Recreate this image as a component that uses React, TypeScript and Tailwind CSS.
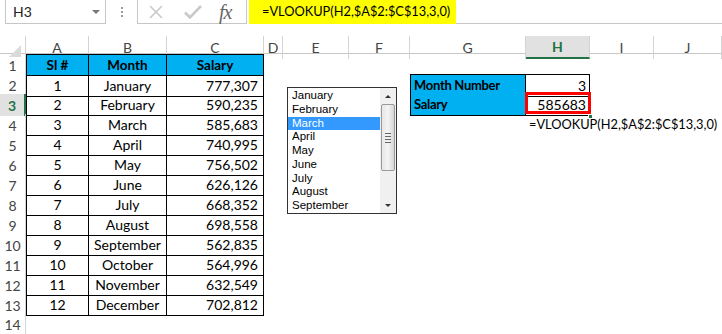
import React from "react";

const months = [
  "January",
  "February",
  "March",
  "April",
  "May",
  "June",
  "July",
  "August",
  "September",
  "October",
  "November",
  "December",
];
const salaries = [
  "777,307",
  "590,235",
  "585,683",
  "740,995",
  "756,502",
  "626,126",
  "668,352",
  "698,558",
  "562,835",
  "564,996",
  "632,549",
  "702,812",
];
const letters = ["A", "B", "C", "D", "E", "F", "G", "H", "I", "J"];
const rowGrid =
  "grid grid-cols-[26px_63px_78px_97px_19px_66px_61px_116px_64px_64px_68px]";
const formula = "=VLOOKUP(H2,$A$2:$C$13,3,0)";

// one worksheet cell
function Cell({ r, c }: { r: number; c: number }) {
  let cls = "relative flex items-center whitespace-nowrap text-black";
  let size = " text-[14px]";
  let text: React.ReactNode = null;

  // table A1:C13
  if (r <= 13 && c <= 2) {
    cls += " border-b border-r border-black";
    if (c === 0) cls += " border-l";
    if (r === 1) {
      cls += " border-t bg-[#00b0f0] font-bold justify-center";
      size = " text-[13.5px]";
      text = ["Sl #", "Month", "Salary"][c];
    } else {
      text = c === 0 ? r - 1 : c === 1 ? months[r - 2] : salaries[r - 2];
      cls += c === 2 ? " justify-end pr-[5px]" : " justify-center";
    }
  }

  // lookup block G2:H3
  if ((r === 2 || r === 3) && (c === 6 || c === 7)) {
    cls += " border-b border-r border-black";
    if (r === 2) cls += " border-t";
    if (c === 6) {
      cls += " border-l bg-[#00b0f0] font-bold pl-[3px] tracking-[-0.3px]";
      size = " text-[13px]";
      text = r === 2 ? "Month Number" : "Salary";
    } else {
      cls += " justify-end pr-[3px]";
      text = r === 2 ? "3" : "585683";
    }
  }

  if (r === 4 && c === 7) {
    cls += " pl-[3px] overflow-visible z-10";
    size = " text-[12.8px]";
    text = formula;
  }

  return (
    <div className={cls + size}>
      {text}
      {r === 3 && c === 7 && (
        <>
          <div className="absolute left-[-1px] top-[-2px] w-[66px] h-[22px] border-[3px] border-[#ff0000]" />
          <div className="absolute right-[-4px] bottom-[-4px] w-[5px] h-[5px] bg-[#217346] border border-white" />
        </>
      )}
    </div>
  );
}

function FormulaBar() {
  return (
    <div className="flex h-[24px] items-start">
      <div className="ml-[5px] -mt-px h-[25px] w-[101px] border border-[#c6c6c6] flex items-center justify-between pl-[7px] pr-[5px] text-[14px] text-[#222]">
        <span>H3</span>
        <span className="w-0 h-0 border-l-[4px] border-r-[4px] border-t-[4px] border-l-transparent border-r-transparent border-t-[#777]" />
      </div>
      <div className="w-[31px] h-[24px] flex flex-col items-center justify-center gap-[2px]">
        <span className="w-[2px] h-[2px] bg-[#9a9a9a]" />
        <span className="w-[2px] h-[2px] bg-[#9a9a9a]" />
        <span className="w-[2px] h-[2px] bg-[#9a9a9a]" />
      </div>
      <div className="-mt-px h-[25px] w-[110px] border border-[#c6c6c6] flex items-center">
        <svg width="16" height="16" viewBox="0 0 16 16" className="ml-[10px]">
          <path d="M2 2 L14 14 M14 2 L2 14" stroke="#c9c9c9" strokeWidth="1.6" fill="none" />
        </svg>
        <svg width="20" height="16" viewBox="0 0 20 16" className="ml-[19px]">
          <path d="M2 8.5 L7 13.5 L18 2" stroke="#c9c9c9" strokeWidth="2.6" fill="none" />
        </svg>
        <span className="ml-[16px] font-['Liberation_Serif',serif] italic text-[20px] leading-none text-[#666] tracking-[-1px]">
          fx
        </span>
      </div>
      <div className="ml-[2px] flex-1 h-[24px] border-b border-[#c6c6c6]">
        <div className="w-[207px] h-[24px] bg-[#ffff00] pl-[13px] flex items-center text-[12.8px] text-black whitespace-nowrap">
          {formula}
        </div>
      </div>
    </div>
  );
}

function ListBox() {
  return (
    <div className="absolute left-[287px] top-[87px] w-[110px] h-[127px] border border-[#333] bg-white flex font-['Liberation_Sans',sans-serif] text-[11.5px]">
      <div className="flex-1 pt-px">
        {months.slice(0, 9).map((m) => (
          <div
            key={m}
            className={
              m === "March"
                ? "h-[13.75px] leading-[13.75px] pl-[4px] bg-[#3399ff] text-white"
                : "h-[13.75px] leading-[13.75px] pl-[4px] text-black"
            }
          >
            {m}
          </div>
        ))}
      </div>
      <div className="w-[16px] bg-[#f0f0f0] flex flex-col items-center">
        <div className="h-[16px] flex items-center justify-center">
          <span className="w-0 h-0 border-l-[3px] border-r-[3px] border-b-[3px] border-l-transparent border-r-transparent border-b-[#333]" />
        </div>
        <div className="w-[14px] h-[67px] rounded-[2px] border border-[#9a9a9a] bg-gradient-to-r from-[#e6e6e6] via-[#f4f4f4] to-[#d6d6d6] flex flex-col items-center justify-center gap-[2px]">
          <span className="w-[6px] h-px bg-[#666]" />
          <span className="w-[6px] h-px bg-[#666]" />
          <span className="w-[6px] h-px bg-[#666]" />
          <span className="w-[6px] h-px bg-[#666]" />
        </div>
        <div className="flex-1" />
        <div className="h-[16px] flex items-center justify-center">
          <span className="w-0 h-0 border-l-[3px] border-r-[3px] border-t-[3px] border-l-transparent border-r-transparent border-t-[#333]" />
        </div>
      </div>
    </div>
  );
}

export default function App() {
  const rows = Array.from({ length: 14 }, (_, i) => i + 1);
  return (
    <div className="relative w-[722px] h-[334px] overflow-hidden bg-white font-['Lato',sans-serif]">
      <FormulaBar />

      {/* column headers */}
      <div className={`${rowGrid} mt-[12px] h-[18px] border-b border-[#c6c6c6]`}>
        <div className="border-r border-[#d4d4d4] flex items-end justify-end pr-[4px] pb-[2px]">
          <svg width="12" height="12" viewBox="0 0 12 12">
            <path d="M12 0 L12 12 L0 12 Z" fill="#dadada" />
          </svg>
        </div>
        {letters.map((l) => (
          <div
            key={l}
            className={
              l === "H"
                ? "flex items-center justify-center text-[14px] font-bold text-[#217346] bg-[#e1e1e1] border-r border-[#d4d4d4] border-b-2 border-b-[#217346]"
                : "flex items-center justify-center text-[14px] text-[#444] border-r border-[#d4d4d4]"
            }
          >
            {l}
          </div>
        ))}
      </div>

      {/* rows */}
      {rows.map((r) => (
        <div key={r} className={`${rowGrid} h-[20px]`}>
          <div
            className={
              r === 3
                ? "flex items-center justify-center text-[14px] font-bold text-[#217346] bg-[#e1e1e1] border-r-2 border-[#217346]"
                : "flex items-center justify-center text-[14px] text-[#444] border-r border-[#d4d4d4]"
            }
          >
            {r}
          </div>
          {letters.map((_, c) => (
            <Cell key={c} r={r} c={c} />
          ))}
        </div>
      ))}

      <ListBox />
    </div>
  );
}
